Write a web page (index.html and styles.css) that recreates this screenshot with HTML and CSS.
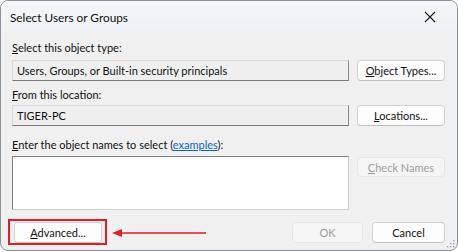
FILE: index.html
```html
<!DOCTYPE html>
<html>
<head>
<meta charset="utf-8">
<link rel="stylesheet" href="styles.css">
</head>
<body>
<div class="window">
  <div class="titlebar">
    <span class="title">Select Users or Groups</span>
    <svg class="close" width="12" height="12" viewBox="0 0 12 12"><path d="M1 1L11 11M11 1L1 11" stroke="#1a1a1a" stroke-width="1.1" fill="none"/></svg>
  </div>
  <div class="content">
    <div class="label l1"><u>S</u>elect this object type:</div>
    <div class="row r1">
      <div class="field">Users, Groups, or Built-in security principals</div>
      <button class="btn"><u>O</u>bject Types...</button>
    </div>
    <div class="label l2"><u>F</u>rom this location:</div>
    <div class="row r2">
      <div class="field">TIGER-PC</div>
      <button class="btn"><u>L</u>ocations...</button>
    </div>
    <div class="label l3"><u>E</u>nter the object names to select (<span class="link">examples</span>):</div>
    <div class="row top">
      <div class="textarea"></div>
      <button class="btn disabled"><u>C</u>heck Names</button>
    </div>
    <div class="footer">
      <button class="btn adv"><u>A</u>dvanced...</button>
      <div class="spacer"></div>
      <button class="btn disabled ok">OK</button>
      <button class="btn cancel">Cancel</button>
    </div>
  </div>
  <div class="highlight"></div>
  <div class="arrow">
    <svg width="96" height="10" viewBox="0 0 96 10"><path d="M0 5L10 1V9Z" fill="#e01e24"/><path d="M9 5H94" stroke="#e01e24" stroke-width="1.6"/></svg>
  </div>
  <svg class="grip" width="8" height="8" viewBox="0 0 8 8" fill="#a8a8a8"><rect x="6" y="0" width="1.4" height="1.4"/><rect x="3" y="3" width="1.4" height="1.4"/><rect x="6" y="3" width="1.4" height="1.4"/><rect x="0" y="6" width="1.4" height="1.4"/><rect x="3" y="6" width="1.4" height="1.4"/><rect x="6" y="6" width="1.4" height="1.4"/></svg>
</div>
</body>
</html>
```
FILE: styles.css
```css
html, body {
  margin: 0;
  padding: 0;
  background: #ffffff;
}
body {
  width: 458px;
  height: 252px;
  overflow: hidden;
  font-family: Lato, "Noto Sans", sans-serif;
  font-size: 11px;
  color: #111111;
}
.window {
  position: relative;
  box-sizing: border-box;
  width: 458px;
  height: 251px;
  border: 1px solid #8c9098;
  border-radius: 8px;
  background: #f0f0f0;
  overflow: hidden;
}
.titlebar {
  height: 31px;
  display: flex;
  align-items: center;
  justify-content: space-between;
  padding: 0 21px 0 9px;
  background: linear-gradient(#f4f6f9, #eff1f4);
}
.title {
  font-size: 11.8px;
  margin-top: 1px;
}
.close {
  display: block;
}
.content {
  padding: 8px 12px 0 11px;
  display: flex;
  flex-direction: column;
}
.label {
  height: 15px;
  line-height: 15px;
}
.l2 {
  margin-top: 6px;
}
.l3 {
  margin-top: 11px;
}
.link {
  color: #0a64c8;
  text-decoration: underline;
}
.row {
  display: flex;
  align-items: center;
  gap: 8px;
  height: 21px;
}
.r1 {
  margin-top: 5px;
}
.r2 {
  margin-top: 3px;
}
.row.top {
  align-items: flex-start;
  height: 54px;
  margin-top: 4px;
}
.field {
  box-sizing: border-box;
  width: 337px;
  height: 21px;
  line-height: 19px;
  padding-left: 4px;
  border: 1px solid #d9d9d9;
  border-right-color: #8a8a8a;
  border-bottom-color: #7a7a7a;
  background: #efefef;
}
.textarea {
  box-sizing: border-box;
  width: 337px;
  height: 54px;
  background: #ffffff;
  border: 1px solid #cfcfcf;
  border-left-color: #7f7f7f;
  border-top-color: #7f7f7f;
}
.btn {
  box-sizing: border-box;
  width: 88px;
  height: 21px;
  padding: 0;
  font-family: inherit;
  font-size: 11px;
  color: #111111;
  background: #fdfdfd;
  border: 1px solid #d2d2d2;
  border-bottom-color: #c2c2c2;
  border-radius: 4px;
}
.btn.disabled {
  color: #9d9d9d;
  background: #f5f5f5;
  border-color: #e6e6e6;
}
.row.top .btn {
  margin-top: 1px;
  height: 20px;
}
.footer {
  display: flex;
  align-items: center;
  margin-top: 12px;
  height: 21px;
}
.footer .btn {
  height: 21px;
}
.adv {
  width: 88px;
  margin-left: 2px;
}
.spacer {
  flex: 1;
}
.ok {
  width: 71px;
  margin-right: 9px;
}
.cancel {
  width: 73px;
}
.highlight {
  position: absolute;
  left: 7px;
  top: 218px;
  width: 95px;
  height: 22px;
  border: 2px solid #e01e24;
}
.arrow {
  position: absolute;
  left: 111px;
  top: 227px;
  line-height: 0;
}
.grip {
  position: absolute;
  right: 2px;
  bottom: 2px;
}
```
